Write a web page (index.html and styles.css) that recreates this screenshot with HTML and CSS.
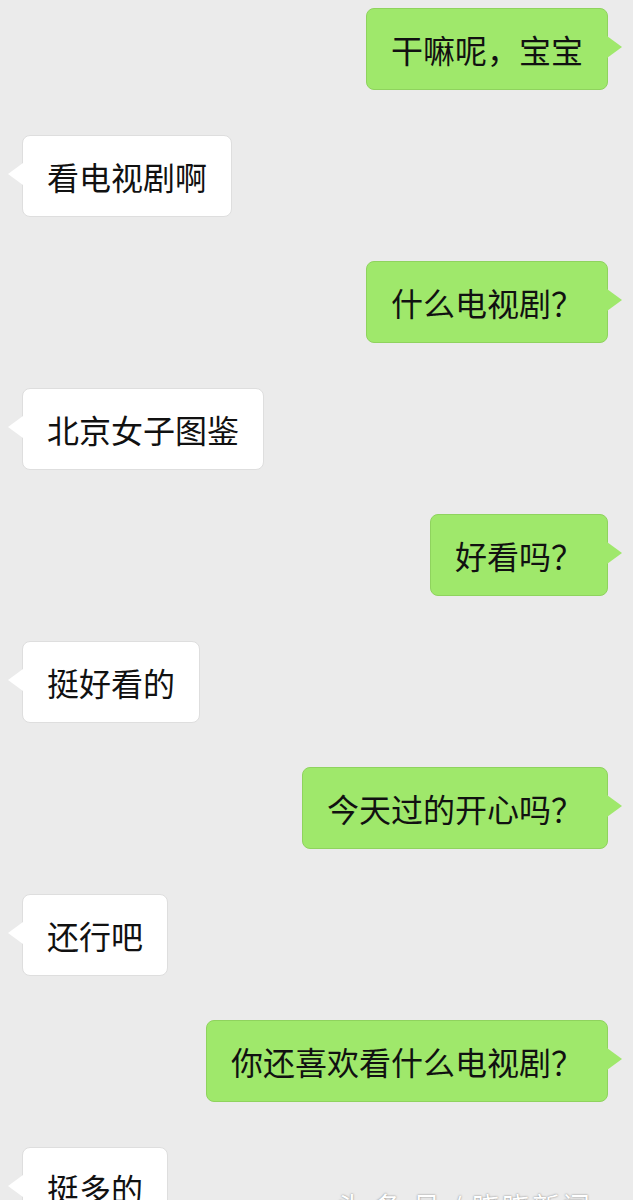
FILE: index.html
```html
<!DOCTYPE html>
<html lang="zh-CN">

<head>
    <meta charset="UTF-8">
    <meta name="viewport" content="width=device-width, initial-scale=1.0">
    <title>聊天记录</title>
    <link rel="stylesheet" href="styles.css">
</head>

<body>

    <div class="chat">
        <div class="msg msg-me"><div class="bubble">干嘛呢，宝宝</div></div>
        <div class="msg msg-other"><div class="bubble">看电视剧啊</div></div>
        <div class="msg msg-me"><div class="bubble">什么电视剧？</div></div>
        <div class="msg msg-other"><div class="bubble">北京女子图鉴</div></div>
        <div class="msg msg-me"><div class="bubble">好看吗？</div></div>
        <div class="msg msg-other"><div class="bubble">挺好看的</div></div>
        <div class="msg msg-me"><div class="bubble">今天过的开心吗？</div></div>
        <div class="msg msg-other"><div class="bubble">还行吧</div></div>
        <div class="msg msg-me"><div class="bubble">你还喜欢看什么电视剧？</div></div>
        <div class="msg msg-other"><div class="bubble">挺多的</div></div>
    </div>

    <!-- watermark -->
    <div class="watermark">头 条 号 / 晓晓新闻</div>

</body>
</html>
```

FILE: styles.css
```css
body {
    margin: 0;
    padding: 0;
    background: #ebebeb;
    font-family: "Noto Sans CJK SC", "Noto Sans", sans-serif;
    overflow: hidden;
    height: 1200px;
    position: relative;
}

.chat {
    display: flex;
    flex-direction: column;
    gap: 44.5px;
    padding-top: 8px;
}

.msg {
    display: flex;
}

.msg-me {
    justify-content: flex-end;
    padding-right: 25px;
}

.msg-other {
    justify-content: flex-start;
    padding-left: 22px;
}

.bubble {
    position: relative;
    height: 82px;
    box-sizing: border-box;
    padding: 0 24px;
    display: flex;
    align-items: center;
    font-size: 32px;
    color: #111;
    border-radius: 8px;
    white-space: nowrap;
}

.msg-me .bubble {
    background: #9fe86b;
    border: 1px solid #8fd35e;
}

.msg-other .bubble {
    background: #fff;
    border: 1px solid #dedede;
}

/* bubble tails */
.bubble::after {
    content: "";
    position: absolute;
    top: 27px;
    width: 0;
    height: 0;
    border-top: 11px solid transparent;
    border-bottom: 11px solid transparent;
}

.msg-me .bubble::after {
    right: -15px;
    border-left: 15px solid #9fe86b;
}

.msg-other .bubble::after {
    left: -15px;
    border-right: 15px solid #fff;
}

.watermark {
    position: absolute;
    left: 336px;
    top: 1186px;
    font-size: 28px;
    color: #fff;
    text-shadow: 0 0 2px #777;
    letter-spacing: 2px;
    white-space: nowrap;
}
```
